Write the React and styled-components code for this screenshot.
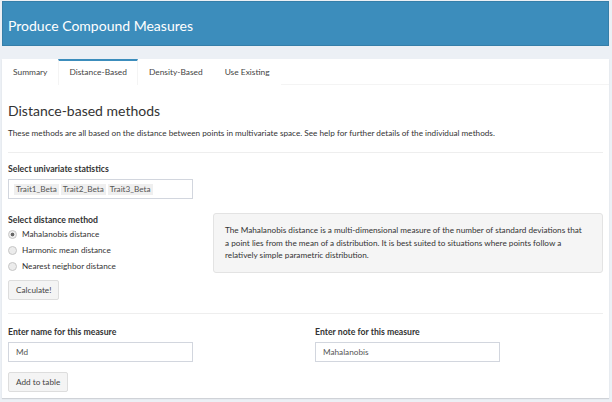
import React from 'react'
import styled, {createGlobalStyle} from 'styled-components'

const mainBlue = '#3c8dbc'
const textColor = '#333'

const GlobalStyle = createGlobalStyle`
  body {
    margin: 0;
    background: #ecf0f5;
    font-family: Lato, "Open Sans", sans-serif;
    color: ${textColor};
  }
`

const Page = styled.div`
  width: 612px;
  height: 402px;
  padding: 1px 3px 0 2px;
  box-sizing: border-box;
  overflow: hidden;
`

const HeaderBox = styled.div`
  height: 45px;
  background: ${mainBlue};
  border: 1px solid #367fa9;
  box-sizing: border-box;
  display: flex;
  align-items: center;
  padding-left: 5px;
`

const Title = styled.h1`
  margin: 3px 0 0;
  font-size: 14px;
  font-weight: 400;
  color: #fff;
`

const TabBox = styled.div`
  margin-top: 13px;
  height: 339px;
  background: #fff;
  box-shadow: 0 1px 1px rgba(0, 0, 0, 0.12);
`

const TabList = styled.div`
  display: flex;
  height: 26px;
  box-sizing: border-box;
  border-bottom: 1px solid #f4f4f4;
`

const Tab = styled.div`
  padding: 0 10px;
  font-size: 8.4px;
  line-height: 23px;
  color: #444;
  border-top: 2px solid ${p => (p.$active ? mainBlue : 'transparent')};
  border-left: 1px solid ${p => (p.$active ? '#f4f4f4' : 'transparent')};
  border-right: 1px solid ${p => (p.$active ? '#f4f4f4' : 'transparent')};
  margin-bottom: -1px;
  background: #fff;
`

const Content = styled.div`
  padding: 0 6px;
`

const Heading = styled.h3`
  margin: 17px 0 0;
  font-size: 14px;
  font-weight: 400;
  line-height: 18px;
`

const Lead = styled.p`
  margin: 7px 0 0;
  font-size: 8.2px;
  line-height: 12px;
`

const Rule = styled.hr`
  margin: ${p => p.$top}px 0 0;
  border: 0;
  border-top: 1px solid #eee;
`

const Label = styled.div`
  font-size: 8.7px;
  font-weight: 700;
  line-height: 12px;
  margin-top: ${p => p.$top || 0}px;
`

const InputBox = styled.div`
  margin-top: 4px;
  width: 185px;
  height: 20px;
  box-sizing: border-box;
  border: 1px solid #d2d6de;
  display: flex;
  align-items: center;
  padding: 0 ${p => (p.$chips ? 5 : 7)}px;
  gap: 2px;
  font-size: 8.2px;
  color: #555;
`

const Chip = styled.span`
  background: #efefef;
  padding: 0 2px;
  line-height: 11px;
`

const Row = styled.div`
  display: flex;
  align-items: flex-start;
  margin-top: 15px;
`

const RadioColumn = styled.div`
  width: 205px;
  flex-shrink: 0;
`

const RadioList = styled.div`
  margin-top: 2px;
  display: flex;
  flex-direction: column;
  gap: 4px;
`

const RadioRow = styled.label`
  display: flex;
  align-items: center;
  gap: 5px;
  font-size: 8.2px;
  line-height: 12px;
`

const RadioDot = styled.span`
  width: 7px;
  height: 7px;
  border-radius: 50%;
  border: 1px solid #c6c6c6;
  background: ${p => (p.$checked ? 'radial-gradient(circle, #666 0 1.5px, #ececec 2.2px)' : '#ececec')};
`

const Button = styled.button`
  display: block;
  margin-top: ${p => p.$top}px;
  height: 20px;
  padding: 0 7px;
  background: #f4f4f4;
  border: 1px solid #ddd;
  border-radius: 2px;
  font-family: inherit;
  font-size: 8.2px;
  color: #444;
`

const Well = styled.div`
  margin-top: -1px;
  flex: 1;
  height: 60px;
  box-sizing: border-box;
  background: #f5f5f5;
  border: 1px solid #e3e3e3;
  border-radius: 3px;
  padding: 10px 6px 0 11px;
  font-size: 8.2px;
  line-height: 12.5px;
`

const FieldGrid = styled.div`
  display: grid;
  grid-template-columns: 307px 1fr;
  margin-top: 12px;
`

const Field = styled.div``

export default function App() {
  return (
    <Page>
      <GlobalStyle/>
      <HeaderBox>
        <Title>Produce Compound Measures</Title>
      </HeaderBox>
      <TabBox>
        <TabList>
          <Tab>Summary</Tab>
          <Tab $active>Distance-Based</Tab>
          <Tab>Density-Based</Tab>
          <Tab>Use Existing</Tab>
        </TabList>
        <Content>
          <Heading>Distance-based methods</Heading>
          <Lead>
            These methods are all based on the distance between points in multivariate space. See help for
            further details of the individual methods.
          </Lead>
          <Rule $top={13}/>
          <Label $top={10}>Select univariate statistics</Label>
          <InputBox $chips>
            <Chip>Trait1_Beta</Chip>
            <Chip>Trait2_Beta</Chip>
            <Chip>Trait3_Beta</Chip>
          </InputBox>
          <Row>
            <RadioColumn>
              <Label>Select distance method</Label>
              <RadioList>
                <RadioRow><RadioDot $checked/>Mahalanobis distance</RadioRow>
                <RadioRow><RadioDot/>Harmonic mean distance</RadioRow>
                <RadioRow><RadioDot/>Nearest neighbor distance</RadioRow>
              </RadioList>
              <Button $top={8}>Calculate!</Button>
            </RadioColumn>
            <Well>
              The Mahalanobis distance is a multi-dimensional measure of the number of standard deviations that<br/>
              a point lies from the mean of a distribution. It is best suited to situations where points follow a<br/>
              relatively simple parametric distribution.
            </Well>
          </Row>
          <Rule $top={13}/>
          <FieldGrid>
            <Field>
              <Label>Enter name for this measure</Label>
              <InputBox>Md</InputBox>
              <Button $top={10}>Add to table</Button>
            </Field>
            <Field>
              <Label>Enter note for this measure</Label>
              <InputBox>Mahalanobis</InputBox>
            </Field>
          </FieldGrid>
        </Content>
      </TabBox>
    </Page>
  )
}
